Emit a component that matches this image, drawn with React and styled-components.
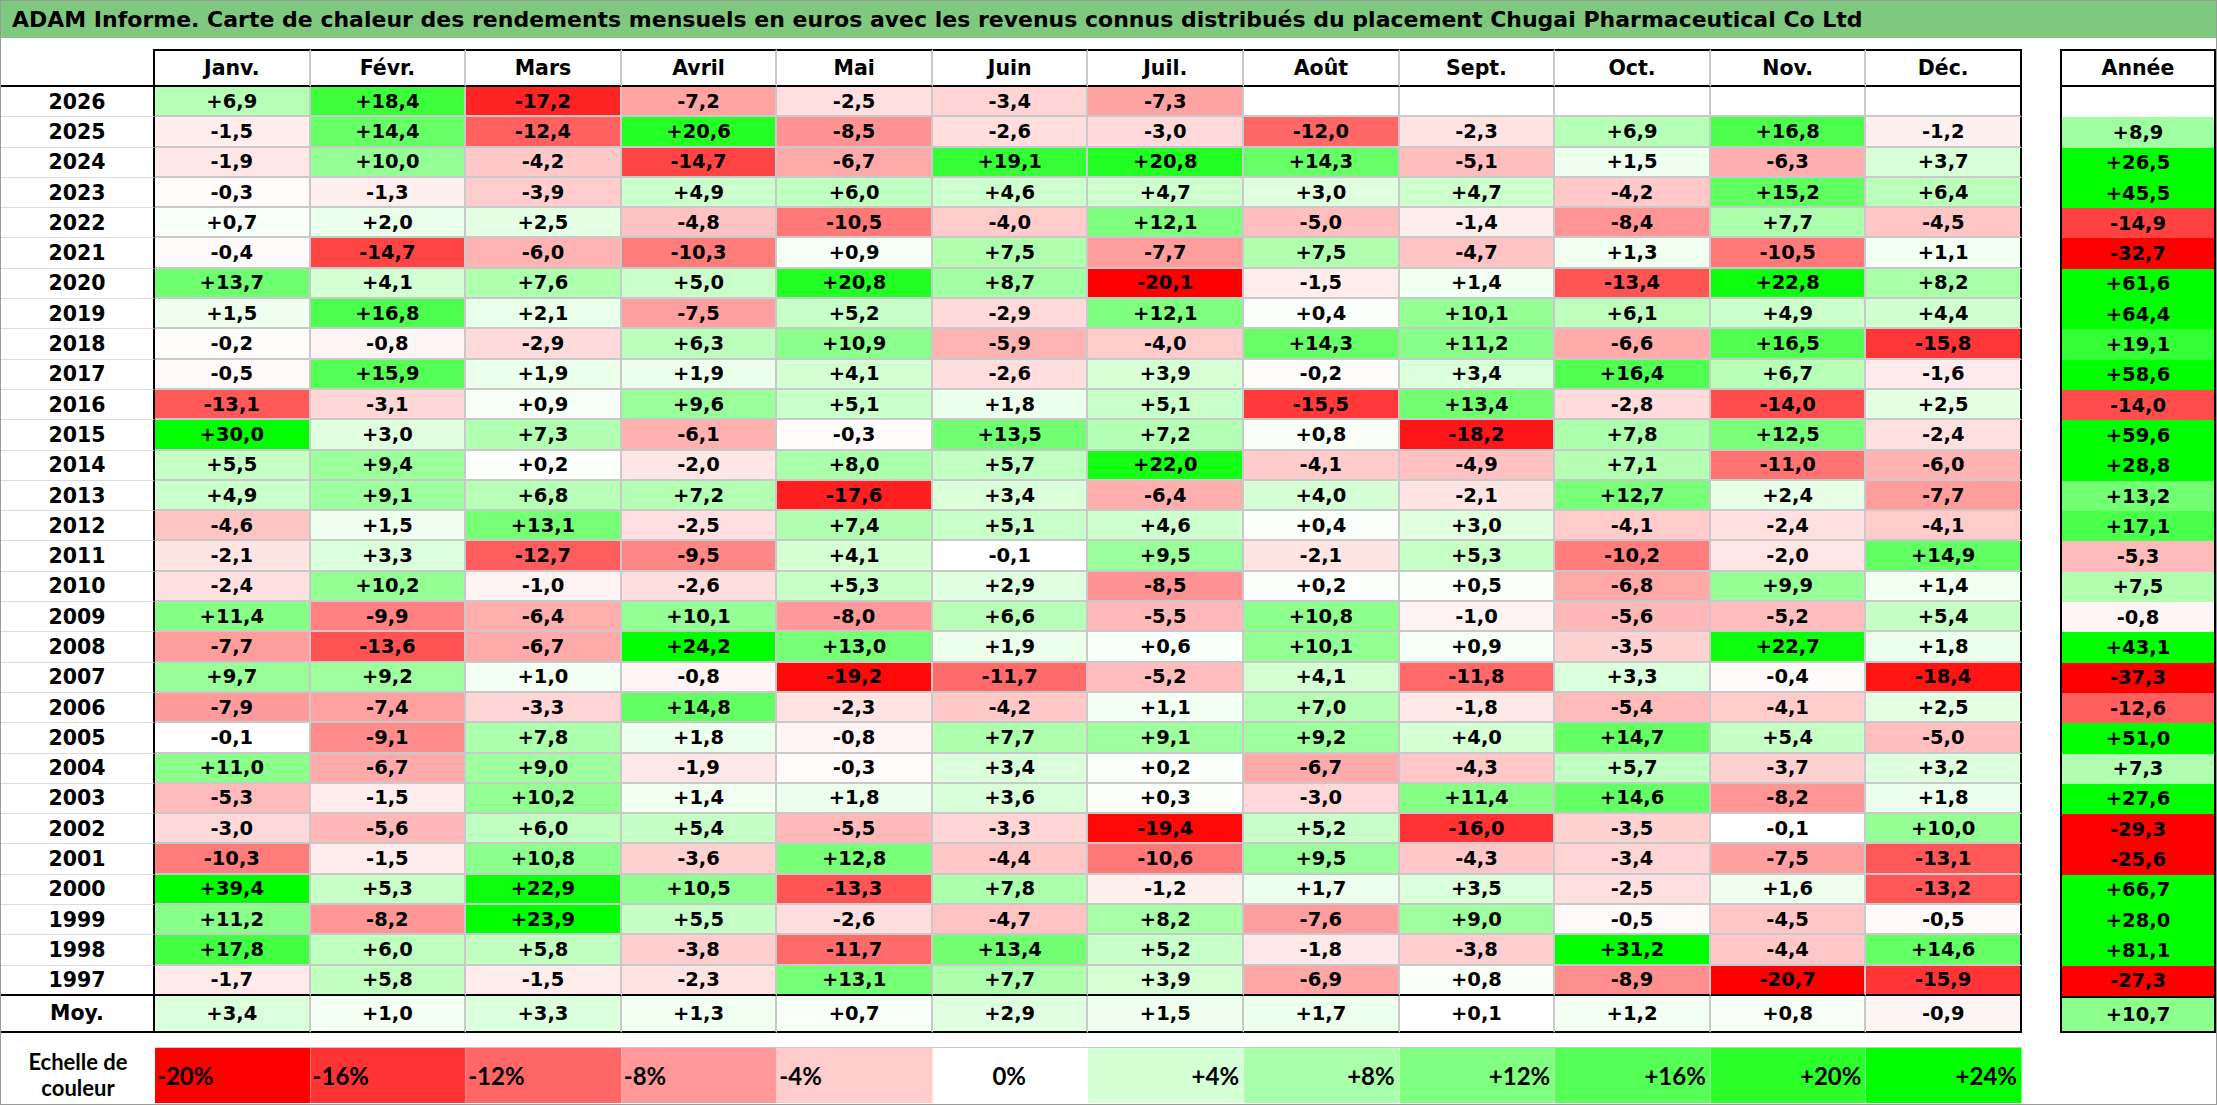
import styled, { createGlobalStyle } from "styled-components";

const GlobalStyle = createGlobalStyle`
    html, body {
        margin: 0;
        padding: 0;
        background: #ffffff;
    }

    * {
        box-sizing: border-box;
    }
`;

const MONTHS = ["Janv.", "Févr.", "Mars", "Avril", "Mai", "Juin", "Juil.", "Août", "Sept.", "Oct.", "Nov.", "Déc."];

// year, monthly returns, yearly return
const ROWS = [
    [2026, [6.9, 18.4, -17.2, -7.2, -2.5, -3.4, -7.3, null, null, null, null, null], null],
    [2025, [-1.5, 14.4, -12.4, 20.6, -8.5, -2.6, -3.0, -12.0, -2.3, 6.9, 16.8, -1.2], 8.9],
    [2024, [-1.9, 10.0, -4.2, -14.7, -6.7, 19.1, 20.8, 14.3, -5.1, 1.5, -6.3, 3.7], 26.5],
    [2023, [-0.3, -1.3, -3.9, 4.9, 6.0, 4.6, 4.7, 3.0, 4.7, -4.2, 15.2, 6.4], 45.5],
    [2022, [0.7, 2.0, 2.5, -4.8, -10.5, -4.0, 12.1, -5.0, -1.4, -8.4, 7.7, -4.5], -14.9],
    [2021, [-0.4, -14.7, -6.0, -10.3, 0.9, 7.5, -7.7, 7.5, -4.7, 1.3, -10.5, 1.1], -32.7],
    [2020, [13.7, 4.1, 7.6, 5.0, 20.8, 8.7, -20.1, -1.5, 1.4, -13.4, 22.8, 8.2], 61.6],
    [2019, [1.5, 16.8, 2.1, -7.5, 5.2, -2.9, 12.1, 0.4, 10.1, 6.1, 4.9, 4.4], 64.4],
    [2018, [-0.2, -0.8, -2.9, 6.3, 10.9, -5.9, -4.0, 14.3, 11.2, -6.6, 16.5, -15.8], 19.1],
    [2017, [-0.5, 15.9, 1.9, 1.9, 4.1, -2.6, 3.9, -0.2, 3.4, 16.4, 6.7, -1.6], 58.6],
    [2016, [-13.1, -3.1, 0.9, 9.6, 5.1, 1.8, 5.1, -15.5, 13.4, -2.8, -14.0, 2.5], -14.0],
    [2015, [30.0, 3.0, 7.3, -6.1, -0.3, 13.5, 7.2, 0.8, -18.2, 7.8, 12.5, -2.4], 59.6],
    [2014, [5.5, 9.4, 0.2, -2.0, 8.0, 5.7, 22.0, -4.1, -4.9, 7.1, -11.0, -6.0], 28.8],
    [2013, [4.9, 9.1, 6.8, 7.2, -17.6, 3.4, -6.4, 4.0, -2.1, 12.7, 2.4, -7.7], 13.2],
    [2012, [-4.6, 1.5, 13.1, -2.5, 7.4, 5.1, 4.6, 0.4, 3.0, -4.1, -2.4, -4.1], 17.1],
    [2011, [-2.1, 3.3, -12.7, -9.5, 4.1, -0.1, 9.5, -2.1, 5.3, -10.2, -2.0, 14.9], -5.3],
    [2010, [-2.4, 10.2, -1.0, -2.6, 5.3, 2.9, -8.5, 0.2, 0.5, -6.8, 9.9, 1.4], 7.5],
    [2009, [11.4, -9.9, -6.4, 10.1, -8.0, 6.6, -5.5, 10.8, -1.0, -5.6, -5.2, 5.4], -0.8],
    [2008, [-7.7, -13.6, -6.7, 24.2, 13.0, 1.9, 0.6, 10.1, 0.9, -3.5, 22.7, 1.8], 43.1],
    [2007, [9.7, 9.2, 1.0, -0.8, -19.2, -11.7, -5.2, 4.1, -11.8, 3.3, -0.4, -18.4], -37.3],
    [2006, [-7.9, -7.4, -3.3, 14.8, -2.3, -4.2, 1.1, 7.0, -1.8, -5.4, -4.1, 2.5], -12.6],
    [2005, [-0.1, -9.1, 7.8, 1.8, -0.8, 7.7, 9.1, 9.2, 4.0, 14.7, 5.4, -5.0], 51.0],
    [2004, [11.0, -6.7, 9.0, -1.9, -0.3, 3.4, 0.2, -6.7, -4.3, 5.7, -3.7, 3.2], 7.3],
    [2003, [-5.3, -1.5, 10.2, 1.4, 1.8, 3.6, 0.3, -3.0, 11.4, 14.6, -8.2, 1.8], 27.6],
    [2002, [-3.0, -5.6, 6.0, 5.4, -5.5, -3.3, -19.4, 5.2, -16.0, -3.5, -0.1, 10.0], -29.3],
    [2001, [-10.3, -1.5, 10.8, -3.6, 12.8, -4.4, -10.6, 9.5, -4.3, -3.4, -7.5, -13.1], -25.6],
    [2000, [39.4, 5.3, 22.9, 10.5, -13.3, 7.8, -1.2, 1.7, 3.5, -2.5, 1.6, -13.2], 66.7],
    [1999, [11.2, -8.2, 23.9, 5.5, -2.6, -4.7, 8.2, -7.6, 9.0, -0.5, -4.5, -0.5], 28.0],
    [1998, [17.8, 6.0, 5.8, -3.8, -11.7, 13.4, 5.2, -1.8, -3.8, 31.2, -4.4, 14.6], 81.1],
    [1997, [-1.7, 5.8, -1.5, -2.3, 13.1, 7.7, 3.9, -6.9, 0.8, -8.9, -20.7, -15.9], -27.3],
];

const AVERAGE = [3.4, 1.0, 3.3, 1.3, 0.7, 2.9, 1.5, 1.7, 0.1, 1.2, 0.8, -0.9];
const AVERAGE_YEAR = 10.7;

const SCALE = [-20, -16, -12, -8, -4, 0, 4, 8, 12, 16, 20, 24];

const heat = (v) => {
    if (v === null || v === undefined) return "#ffffff";
    if (v < 0) {
        const c = Math.round(255 * (1 - Math.min(1, -v / 20)));
        return `rgb(255, ${c}, ${c})`;
    }
    const c = Math.round(255 * (1 - Math.min(1, v / 24)));
    return `rgb(${c}, 255, ${c})`;
};

const fmt = (v) => {
    if (v === null || v === undefined) return "";
    return (v > 0 ? "+" : "") + v.toFixed(1).replace(".", ",");
};

const WIDE = `"DejaVu Sans", "Liberation Sans", sans-serif`;
const NARROW = `"Lato", "Open Sans", "Liberation Sans", sans-serif`;
const ROW_H = "30.3px";
const GRID_LINE = "#c9c9c9";

const Sheet = styled.div`
    width: 2217px;
    height: 1105px;
    border: 1px solid #9a9a9a;
    font-family: ${WIDE};
    color: #000;
    overflow: hidden;
`;

const TitleBar = styled.div`
    height: 37px;
    padding-left: 11px;
    display: flex;
    align-items: center;
    background: #7fc87f;
    font-size: 22px;
    font-weight: 700;
    white-space: nowrap;
`;

const Body = styled.div`
    padding-top: 11px;
`;

const Tables = styled.div`
    display: flex;
    align-items: flex-start;
    gap: 38px;
`;

const HeatTable = styled.div`
    width: 2021px;
    display: grid;
    grid-template-columns: 154px repeat(12, 1fr);
    grid-template-rows: 38px repeat(${ROWS.length}, ${ROW_H}) 37px;
`;

const YearTable = styled.div`
    width: 156px;
    display: grid;
    grid-template-columns: 1fr;
    grid-template-rows: 38px repeat(${ROWS.length}, ${ROW_H}) 37px;
`;

const Cell = styled.div`
    display: flex;
    align-items: center;
    justify-content: center;
    font-size: 19.5px;
    font-weight: 700;
    white-space: nowrap;
`;

const HeadCell = styled(Cell)`
    font-size: 20.5px;
`;

const Corner = styled(Cell)`
    border-right: 2px solid #000;
    border-bottom: 2px solid #000;
`;

const MonthHead = styled(HeadCell)`
    border-top: 2px solid #000;
    border-bottom: 2px solid #000;
    border-right: 2px solid ${p => (p.$last ? "#000" : GRID_LINE)};
`;

const YearLabel = styled(HeadCell)`
    border-right: 2px solid #000;
    border-bottom: ${p => (p.$bottom ? "2px solid #000" : "1px solid #dcdcdc")};
`;

const ValueCell = styled(Cell)`
    background: ${p => p.$bg};
    border-right: 2px solid ${p => (p.$last ? "#000" : GRID_LINE)};
    border-bottom: 2px solid ${p => (p.$bottom ? "#000" : GRID_LINE)};
`;

const AnnualHead = styled(HeadCell)`
    border: 2px solid #000;
`;

const AnnualCell = styled(Cell)`
    background: ${p => p.$bg};
    border-left: 2px solid #000;
    border-right: 2px solid #000;
`;

const AnnualAverage = styled(Cell)`
    background: ${p => p.$bg};
    border: 2px solid #000;
`;

const ScaleRow = styled.div`
    margin-top: 14px;
    width: 2021px;
    height: 56px;
    display: grid;
    grid-template-columns: 154px repeat(12, 1fr);
`;

const ScaleLabel = styled.div`
    display: flex;
    align-items: center;
    justify-content: center;
    text-align: center;
    font-family: ${NARROW};
    font-size: 22px;
    font-weight: 700;
    line-height: 26px;
`;

const ScaleCell = styled.div`
    display: flex;
    align-items: center;
    justify-content: ${p => p.$align};
    padding: 0 4px 0 2px;
    background: ${p => p.$bg};
    border-top: 1px solid #c8c8c8;
    border-right: 1px solid rgba(255, 255, 255, 0.45);
    font-family: ${NARROW};
    font-size: 24px;
    font-weight: 700;
`;

export default function App() {
    return (
        <Sheet>
            <GlobalStyle />
            <TitleBar>
                ADAM Informe. Carte de chaleur des rendements mensuels en euros avec les revenus connus distribués du placement Chugai Pharmaceutical Co Ltd
            </TitleBar>
            <Body>
                <Tables>
                    <HeatTable>
                        <Corner />
                        {MONTHS.map((m, i) => (
                            <MonthHead key={m} $last={i === 11}>{m}</MonthHead>
                        ))}

                        {ROWS.map(([year, months], r) => {
                            const bottom = r === ROWS.length - 1;
                            return [
                                <YearLabel key={year} $bottom={bottom}>{year}</YearLabel>,
                                ...months.map((v, i) => (
                                    <ValueCell key={year + "-" + i} $bg={heat(v)} $last={i === 11} $bottom={bottom}>
                                        {fmt(v)}
                                    </ValueCell>
                                )),
                            ];
                        })}

                        <YearLabel $bottom>Moy.</YearLabel>
                        {AVERAGE.map((v, i) => (
                            <ValueCell key={"avg-" + i} $bg={heat(v)} $last={i === 11} $bottom>
                                {fmt(v)}
                            </ValueCell>
                        ))}
                    </HeatTable>

                    <YearTable>
                        <AnnualHead>Année</AnnualHead>
                        {ROWS.map(([year, , total]) => (
                            <AnnualCell key={year} $bg={heat(total)}>{fmt(total)}</AnnualCell>
                        ))}
                        <AnnualAverage $bg={heat(AVERAGE_YEAR)}>{fmt(AVERAGE_YEAR)}</AnnualAverage>
                    </YearTable>
                </Tables>

                <ScaleRow>
                    <ScaleLabel>Echelle de<br />couleur</ScaleLabel>
                    {SCALE.map(s => {
                        const align = s < 0 ? "flex-start" : s === 0 ? "center" : "flex-end";
                        return (
                            <ScaleCell key={s} $bg={heat(s)} $align={align}>
                                {(s > 0 ? "+" : "") + s + "%"}
                            </ScaleCell>
                        );
                    })}
                </ScaleRow>
            </Body>
        </Sheet>
    );
}
